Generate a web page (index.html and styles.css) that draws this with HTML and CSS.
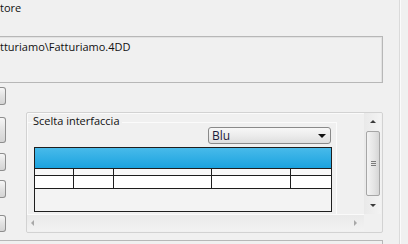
FILE: index.html
```html
<!DOCTYPE html>
<html lang="it">
<head>
    <meta charset="UTF-8">
    <title>Scelta interfaccia</title>
    <link rel="stylesheet" href="styles.css">
</head>
<body>
    <div class="main">
        <div class="caption">tore</div>
        <div class="pathbox">tturiamo\Fatturiamo.4DD</div>
        <div class="row">
            <div class="buttons">
                <div class="btn"></div>
                <div class="btn tall"></div>
                <div class="btn"></div>
                <div class="btn"></div>
                <div class="btn last"></div>
            </div>
            <div class="group">
                <div class="canvas">
                    <div class="frame">
                        <div class="legend">Scelta interfaccia</div>
                        <div class="combo">
                            <span>Blu</span>
                            <i class="caret"></i>
                        </div>
                        <div class="grid">
                            <div class="head"></div>
                            <div class="line thin">
                                <div class="c1"></div><div class="c2"></div><div class="c3"></div><div class="c4"></div><div class="c5"></div>
                            </div>
                            <div class="line white">
                                <div class="c1"></div><div class="c2"></div><div class="c3"></div><div class="c4"></div><div class="c5"></div>
                            </div>
                            <div class="empty"></div>
                        </div>
                    </div>
                </div>
                <div class="vscroll">
                    <div class="arrow"><i class="tri up"></i></div>
                    <div class="thumb"><i class="grip"></i></div>
                    <div class="arrow"><i class="tri down"></i></div>
                </div>
                <div class="hscroll">
                    <div class="arrow"><i class="tri left"></i></div>
                    <div class="arrow"><i class="tri right"></i></div>
                </div>
                <div class="corner"></div>
            </div>
        </div>
        <div class="nextbox"></div>
    </div>
    <div class="sep"></div>
</body>
</html>
```

FILE: styles.css
```css
* {
    box-sizing: border-box;
}
body {
    margin: 0;
    background-color: #f0f0f0;
    font-family: "Open Sans", "Noto Sans", sans-serif;
    font-size: 11px;
    color: #111;
    display: flex;
    height: 244px;
    overflow: hidden;
}
.main {
    width: 399px;
}
.sep {
    width: 2px;
    border-left: 1px solid #dadada;
    background-color: #fbfbfb;
}
.caption {
    height: 36px;
    line-height: 15px;
}
.pathbox {
    width: 383px;
    height: 47px;
    border: 1px solid #b7b7b7;
    border-left: none;
    box-shadow: inset -1px 1px 0 #e2e2e2;
    line-height: 15px;
    padding-top: 2px;
}
.row {
    display: flex;
    margin-top: 4px;
}
.buttons {
    width: 6px;
}
.btn {
    height: 18px;
    margin-bottom: 12px;
    border: 1px solid #8e8e8e;
    border-left: none;
    border-radius: 0 3px 3px 0;
    background: linear-gradient(#f6f6f6, #e2e2e2 50%, #d4d4d4);
}
.btn.tall {
    height: 26px;
    margin-bottom: 10px;
}
.btn:nth-child(3) {
    margin-bottom: 9px;
}
.btn:nth-child(4) {
    margin-bottom: 17px;
}
.btn.last {
    height: 17px;
    margin-bottom: 0;
}
.group {
    margin-left: 20px;
    margin-top: 25px;
    width: 357px;
    height: 121px;
    border: 1px solid #d2d2d2;
    border-radius: 2px;
    box-shadow: inset 1px 1px 0 #fafafa;
    padding: 0 1px 1px 0;
    display: grid;
    grid-template-columns: 337px 17px;
    grid-template-rows: 101px 17px;
}
.canvas {
    padding-top: 9px;
    overflow: hidden;
}
.frame {
    width: 310px;
    height: 92px;
    border-top: 1px solid #fbfbfb;
    border-right: 1px solid #fbfbfb;
}
.legend {
    margin-top: -9px;
    margin-left: 6px;
    height: 13px;
    line-height: 14px;
    width: max-content;
    background-color: #f0f0f0;
    padding-right: 2px;
}
.combo {
    margin-left: 181px;
    width: 123px;
    height: 17px;
    border: 1px solid #8a8a8a;
    border-radius: 3px;
    background: linear-gradient(#f7f7f7, #ececec 50%, #dedede);
    display: flex;
    align-items: center;
    justify-content: space-between;
    padding: 0 4px 0 3px;
    line-height: 15px;
    font-size: 12px;
    color: #1d1a3c;
}
.caret {
    width: 0;
    height: 0;
    border-left: 4px solid transparent;
    border-right: 4px solid transparent;
    border-top: 4px solid #111;
}
.grid {
    margin-top: 3px;
    margin-left: 7px;
    width: 298px;
    height: 65px;
    border: 1px solid #1e1e1e;
    display: flex;
    flex-direction: column;
}
.head {
    height: 21px;
    border-bottom: 1px solid #1e1e1e;
    background: linear-gradient(#48baea, #1ba3df);
}
.line {
    display: flex;
    border-bottom: 1px solid #1e1e1e;
}
.line.thin {
    height: 7px;
    background-color: #f8f8f8;
}
.line.white {
    height: 13px;
    background-color: #fff;
}
.line div {
    border-right: 1px solid #1e1e1e;
}
.c1 { width: 39px; }
.c2 { width: 40px; }
.c3 { width: 98px; }
.c4 { width: 79px; }
.line .c5 { flex: 1; border-right: none; }
.empty {
    flex: 1;
    background-color: #f3f3f3;
}
.vscroll {
    display: flex;
    flex-direction: column;
    align-items: center;
    background: linear-gradient(90deg, #e9e9e9, #f3f3f3);
}
.hscroll {
    display: flex;
    justify-content: space-between;
    border-top: 1px solid #fafafa;
    background: linear-gradient(#eaeaea, #f2f2f2);
}
.arrow {
    width: 17px;
    height: 17px;
    display: flex;
    align-items: center;
    justify-content: center;
}
.hscroll .arrow {
    height: 16px;
}
.tri {
    width: 0;
    height: 0;
}
.tri.up {
    border-left: 3px solid transparent;
    border-right: 3px solid transparent;
    border-bottom: 3px solid #3a3a3a;
}
.tri.down {
    border-left: 3px solid transparent;
    border-right: 3px solid transparent;
    border-top: 3px solid #3a3a3a;
}
.tri.left {
    border-top: 3px solid transparent;
    border-bottom: 3px solid transparent;
    border-right: 3px solid #a8a8a8;
    margin-left: -6px;
}
.tri.right {
    border-top: 3px solid transparent;
    border-bottom: 3px solid transparent;
    border-left: 3px solid #a8a8a8;
}
.thumb {
    width: 14px;
    height: 65px;
    margin: 1px 0 1px 1px;
    border: 1px solid #a6a6a6;
    border-radius: 2px;
    background: linear-gradient(90deg, #f3f3f3, #e4e4e4 60%, #d6d6d6);
    display: flex;
    align-items: center;
    justify-content: center;
}
.grip {
    width: 5px;
    height: 5px;
    border-top: 1px solid #7c7c7c;
    border-bottom: 1px solid #7c7c7c;
    background: linear-gradient(transparent 1px, #7c7c7c 1px, #7c7c7c 2px, transparent 2px);
}
.corner {
    background-color: #f0f0f0;
}
.nextbox {
    margin-top: 7px;
    width: 383px;
    height: 10px;
    border-top: 1px solid #b7b7b7;
    border-right: 1px solid #b7b7b7;
}
```
